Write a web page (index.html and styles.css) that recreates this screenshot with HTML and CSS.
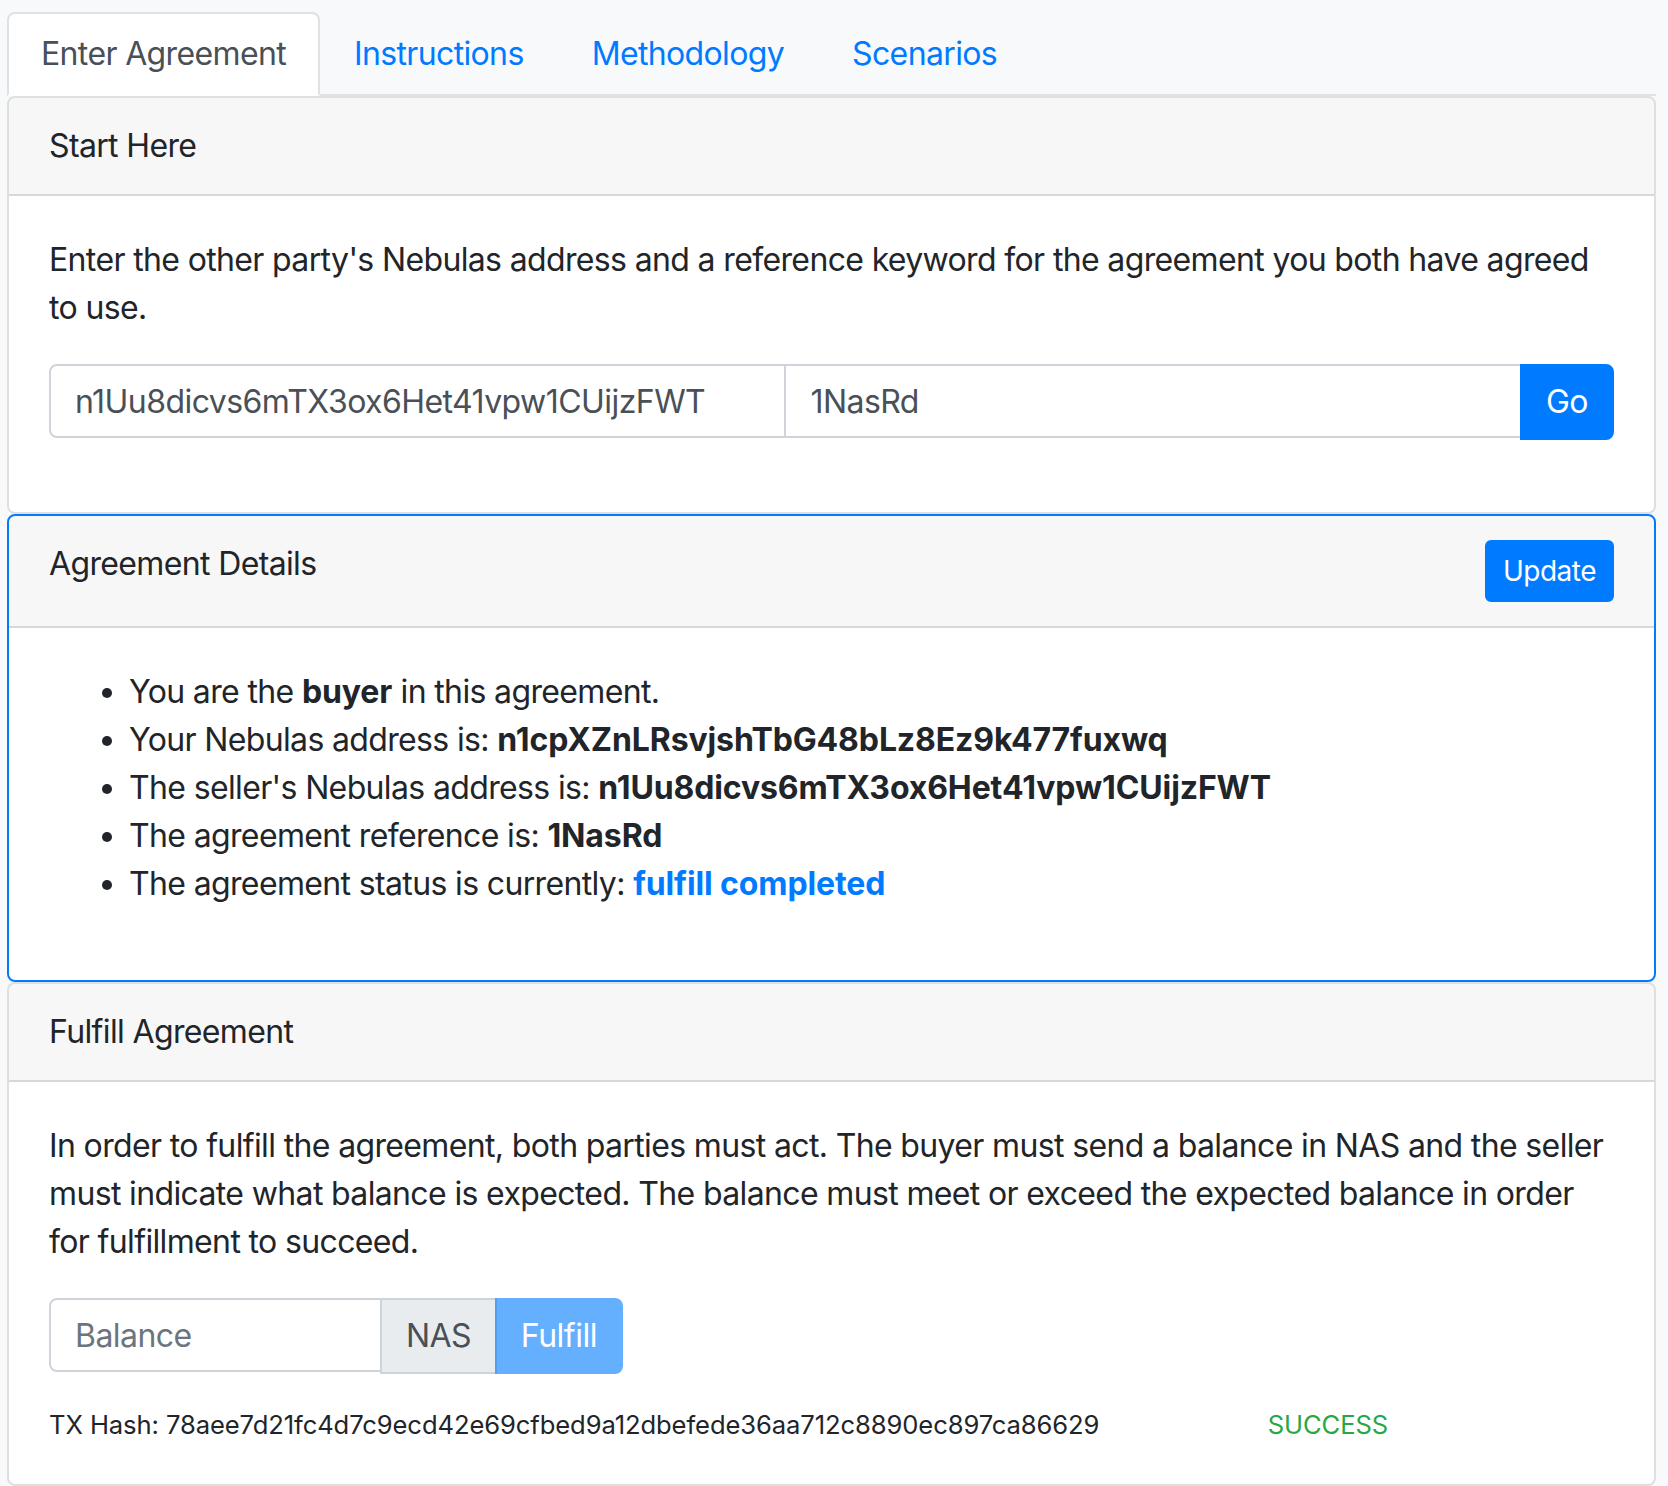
FILE: index.html
```html
<!DOCTYPE html>
<html lang="en">
<head>
<meta charset="utf-8">
<title>Agreement</title>
<link rel="stylesheet" href="styles.css">
</head>
<body>
<div class="page">
  <ul class="tabs">
    <li><a class="tab active">Enter Agreement</a></li>
    <li><a class="tab">Instructions</a></li>
    <li><a class="tab">Methodology</a></li>
    <li><a class="tab">Scenarios</a></li>
  </ul>

  <div class="card">
    <div class="card-header">Start Here</div>
    <div class="card-body">
      <p>Enter the other party's Nebulas address and a reference keyword for the agreement you both have agreed to use.</p>
      <div class="input-group">
        <input class="form-control first" type="text" value="n1Uu8dicvs6mTX3ox6Het41vpw1CUijzFWT">
        <input class="form-control mid" type="text" value="1NasRd">
        <button class="btn btn-primary last">Go</button>
      </div>
    </div>
  </div>

  <div class="card card-primary">
    <div class="card-header header-split">
      <span>Agreement Details</span>
      <button class="btn btn-primary btn-sm">Update</button>
    </div>
    <div class="card-body">
      <ul class="details">
        <li>You are the <b>buyer</b> in this agreement.</li>
        <li>Your Nebulas address is: <b>n1cpXZnLRsvjshTbG48bLz8Ez9k477fuxwq</b></li>
        <li>The seller's Nebulas address is: <b>n1Uu8dicvs6mTX3ox6Het41vpw1CUijzFWT</b></li>
        <li>The agreement reference is: <b>1NasRd</b></li>
        <li>The agreement status is currently: <b class="status">fulfill completed</b></li>
      </ul>
    </div>
  </div>

  <div class="card">
    <div class="card-header">Fulfill Agreement</div>
    <div class="card-body">
      <p>In order to fulfill the agreement, both parties must act. The buyer must send a balance in NAS and the seller must indicate what balance is expected. The balance must meet or exceed the expected balance in order for fulfillment to succeed.</p>
      <div class="input-group inline">
        <input class="form-control first balance" type="text" placeholder="Balance">
        <span class="addon">NAS</span>
        <button class="btn btn-primary last disabled">Fulfill</button>
      </div>
      <div class="tx-row">
        <div class="col-9">TX Hash: 78aee7d21fc4d7c9ecd42e69cfbed9a12dbefede36aa712c8890ec897ca86629</div>
        <div class="col-3 success">SUCCESS</div>
      </div>
    </div>
  </div>
</div>
</body>
</html>
```

FILE: styles.css
```css
* {
  box-sizing: border-box;
}

body {
  margin: 0;
  background: #f8f9fa;
  font-family: Inter, "Noto Sans", sans-serif;
  font-size: 32px;
  line-height: 48px;
  letter-spacing: -0.64px;
  color: #212529;
}

.page {
  padding: 12px 12px 0 7px;
}

.tabs {
  display: flex;
  list-style: none;
  margin: 0;
  padding: 0;
  border-bottom: 2px solid #dee2e6;
}

.tab {
  display: block;
  padding: 16px 32px;
  margin-bottom: -2px;
  border: 2px solid transparent;
  border-top-left-radius: 8px;
  border-top-right-radius: 8px;
  color: #007bff;
  cursor: pointer;
}

.tab.active {
  color: #495057;
  background: #fff;
  border-color: #dee2e6 #dee2e6 #fff;
}

.card {
  background: #fff;
  border: 2px solid rgba(0, 0, 0, 0.125);
  border-radius: 8px;
  overflow: hidden;
}

.card-primary {
  border-color: #007bff;
}

.card-header {
  padding: 24px 40px;
  background: rgba(0, 0, 0, 0.03);
  border-bottom: 2px solid rgba(0, 0, 0, 0.125);
}

.header-split {
  display: flex;
  justify-content: space-between;
  align-items: flex-start;
}

.card-body {
  padding: 40px;
}

p {
  margin: 0 0 32px;
}

b {
  letter-spacing: -0.12px;
}

.input-group {
  display: flex;
  margin-bottom: 32px;
}

.input-group.inline {
  display: inline-flex;
  vertical-align: top;
}

.form-control {
  flex: 1 1 0;
  min-width: 0;
  height: 74px;
  padding: 12px 24px;
  font-family: inherit;
  font-size: 32px;
  line-height: 48px;
  letter-spacing: -0.55px;
  color: #495057;
  background: #fff;
  border: 2px solid #ced4da;
  border-radius: 0;
  outline: none;
}

.form-control::placeholder {
  color: #6c757d;
}

.form-control.first {
  border-radius: 8px 0 0 8px;
}

.form-control.mid {
  margin-left: -2px;
}

.form-control.balance {
  flex: 0 0 333px;
  width: 333px;
}

.addon {
  display: flex;
  align-items: center;
  margin-left: -2px;
  padding: 12px 24px;
  color: #495057;
  background: #e9ecef;
  border: 2px solid #ced4da;
}

.btn {
  font-family: inherit;
  font-size: 32px;
  line-height: 48px;
  letter-spacing: -0.5px;
  padding: 12px 24px;
  border: 2px solid #007bff;
  border-radius: 8px;
  cursor: pointer;
}

.btn-primary {
  color: #fff;
  background: #007bff;
}

.btn.last {
  margin-left: -2px;
  border-radius: 0 8px 8px 0;
}

.btn.disabled {
  opacity: 0.6;
}

.btn-sm {
  font-size: 28px;
  line-height: 42px;
  padding: 8px 16px;
  border-radius: 6px;
}

.details {
  margin: 0 0 32px;
  padding-left: 80px;
}

.status {
  color: #007bff;
}

.tx-row {
  display: flex;
  margin: 0 -30px;
  font-size: 25.6px;
  line-height: 38.4px;
  letter-spacing: -0.1px;
}

.col-9 {
  flex: 0 0 75%;
  padding: 0 30px;
}

.col-3 {
  flex: 0 0 25%;
  padding: 0 30px;
}

.success {
  color: #28a745;
}
```
